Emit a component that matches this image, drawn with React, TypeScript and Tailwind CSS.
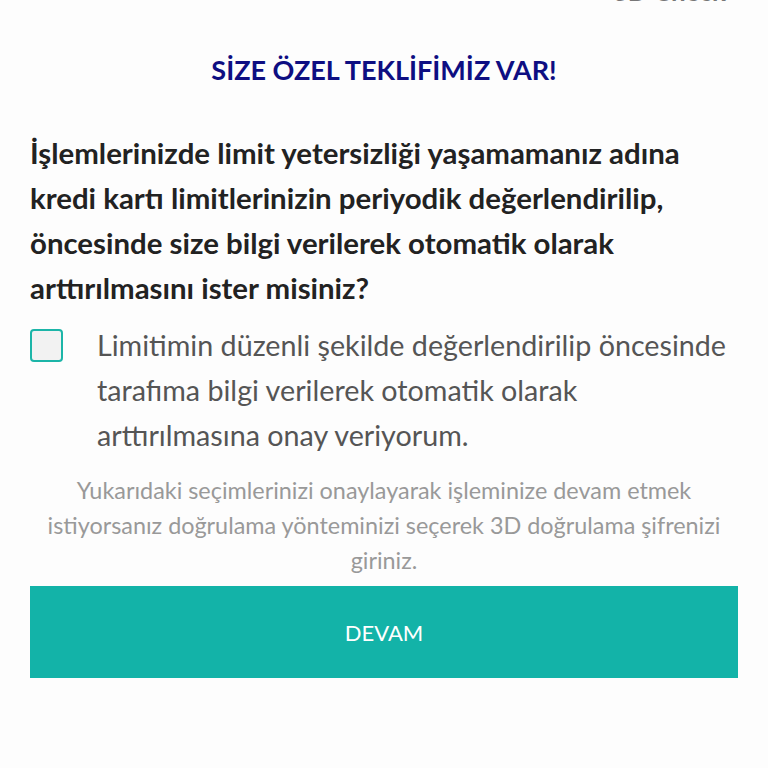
export default function App() {
  return (
    <div
      className="relative w-[768px] h-[768px] overflow-hidden bg-[#fdfdfd]"
      style={{ fontFamily: "Lato, 'Noto Sans', sans-serif" }}
    >
      <div className="absolute right-[42px] top-[-28px] text-[26px] font-bold text-[#777]">3D Check</div>
      <div className="px-[30px] pt-[50px]">
        <h1 className="text-center text-[27px] leading-[40px] font-bold text-[#0e0e82]">SİZE ÖZEL TEKLİFİMİZ VAR!</h1>
        <p className="mt-[40px] text-[29.4px] leading-[45px] font-bold text-[#222] whitespace-nowrap">
          İşlemlerinizde limit yetersizliği yaşamamanız adına
          <br />
          kredi kartı limitlerinizin periyodik değerlendirilip,
          <br />
          öncesinde size bilgi verilerek otomatik olarak
          <br />
          arttırılmasını ister misiniz?
        </p>
        <label className="mt-[13px] flex items-start gap-[34px]">
          <span className="mt-[6px] w-[33px] h-[33px] shrink-0 rounded-[4px] border-2 border-[#1cb5a8] bg-[#f2f2f2]" />
          <span className="text-[28.7px] leading-[45px] text-[#555] whitespace-nowrap">
            Limitimin düzenli şekilde değerlendirilip öncesinde
            <br />
            tarafıma bilgi verilerek otomatik olarak
            <br />
            arttırılmasına onay veriyorum.
          </span>
        </label>
        <p className="mt-[15px] text-center text-[23.4px] leading-[35px] text-[#999] whitespace-nowrap">
          Yukarıdaki seçimlerinizi onaylayarak işleminize devam etmek
          <br />
          istiyorsanız doğrulama yönteminizi seçerek 3D doğrulama şifrenizi
          <br />
          giriniz.
        </p>
        <button className="mt-[8px] w-[708px] h-[92px] bg-[#13b3a8] text-white text-[22px]">DEVAM</button>
      </div>
    </div>
  );
}
